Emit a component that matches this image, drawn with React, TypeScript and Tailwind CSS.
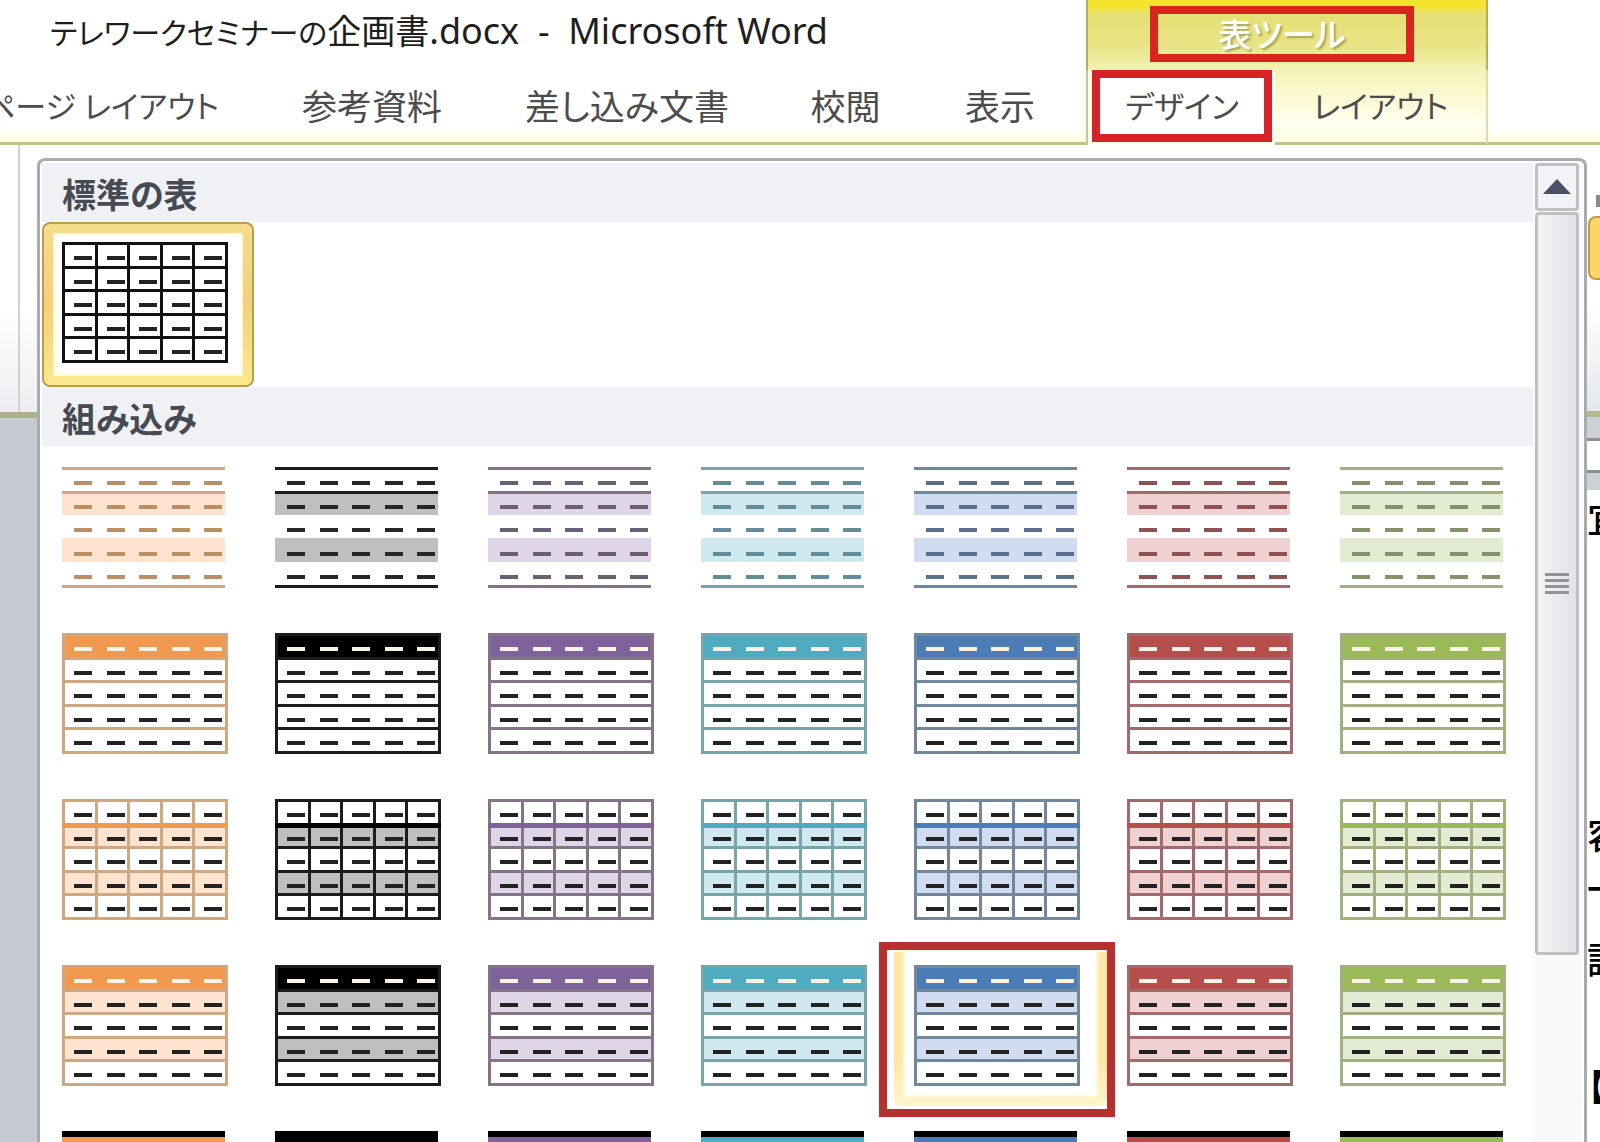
import clsx from 'clsx';

type Theme = {
  name: string;
  head: string;
  line: string;
  band: string;
  dash: string;
};

type Variant = 'plain' | 'list' | 'grid' | 'banded' | 'dark' | 'basic';

const themes: Theme[] = [
  { name: 'オレンジ', head: '#f0994f', line: '#cfa882', band: '#fde3d0', dash: '#b98f63' },
  { name: '黒', head: '#000000', line: '#1c1c1c', band: '#bfbfbf', dash: '#262626' },
  { name: '紫', head: '#7f6299', line: '#857488', band: '#ded6e8', dash: '#6c5f74' },
  { name: '水色', head: '#4fabbf', line: '#78a5ac', band: '#d0e9f0', dash: '#628d98' },
  { name: '青', head: '#4c7cb6', line: '#71879c', band: '#d1dcf0', dash: '#5b6f8a' },
  { name: '赤', head: '#b84d4d', line: '#a26a6a', band: '#f0d1d1', dash: '#8f5252' },
  { name: '緑', head: '#9aba59', line: '#a1b07c', band: '#e3ecd3', dash: '#82926a' },
];

const variants: Variant[] = ['plain', 'list', 'grid', 'banded', 'dark'];

const variantNames: Record<Variant, string> = {
  basic: '表 (格子)',
  plain: '表 (網かけ)',
  list: '表 (リスト)',
  grid: '表 (グリッド)',
  banded: '表 (縞模様)',
  dark: '表 (濃色)',
};

const font = "font-['Noto_Sans','Noto_Sans_CJK_JP',sans-serif]";
const steps = [0, 1, 2, 3, 4];
const rowY = (i: number) => Math.round(i * 23.6);
const colX = (i: number) => Math.round(i * 32.5);

function TableThumb({ variant, theme }: { variant: Variant; theme: Theme }) {
  const { head, line, band, dash } = theme;
  const open = variant === 'plain' || variant === 'dark';
  const headed = variant === 'list' || variant === 'banded' || variant === 'dark';
  const striped = variant === 'plain' || variant === 'grid' || variant === 'banded';
  const width = open ? 163 : 166;
  const lines = variant === 'plain' ? [0, 1, 5] : variant === 'dark' ? [] : [0, 1, 2, 3, 4, 5];

  return (
    <svg width="166" height="122" viewBox="0 0 166 122" aria-hidden="true">
      {striped && <rect x="0" y={rowY(1)} width={width} height="24" fill={band} />}
      {striped && <rect x="0" y={rowY(3)} width={width} height="24" fill={band} />}
      {headed && <rect x="0" y="0" width={width} height="26" fill={head} />}
      {lines.map((i) => (
        <rect key={i} x="0" y={rowY(i)} width={width} height="3" fill={line} />
      ))}
      {!open && <rect x="0" y="0" width="3" height="121" fill={line} />}
      {!open && <rect x="163" y="0" width="3" height="121" fill={line} />}
      {(variant === 'grid' || variant === 'basic') &&
        [1, 2, 3, 4].map((i) => (
          <rect key={i} x={colX(i)} y="0" width="3" height="121" fill={line} />
        ))}
      {variant === 'grid' && <rect x="0" y="24" width="166" height="5" fill={head} />}
      {variant === 'dark' && <rect x="0" y="0" width="163" height="6" fill="#000" />}
      {steps.map((r) =>
        steps.map((c) => (
          <rect
            key={`${r}-${c}`}
            x={12 + colX(c)}
            y={14 + rowY(r)}
            width="18"
            height="4"
            fill={headed && r === 0 ? '#fbf3e6' : variant === 'plain' ? dash : '#222'}
          />
        ))
      )}
    </svg>
  );
}

function SectionTitle({ children }: { children: string }) {
  return (
    <h2 className="flex h-[59px] items-center bg-[#f0f1f5] pt-1 pl-5 text-[34px] leading-none font-bold text-[#464a52]">
      {children}
    </h2>
  );
}

function Tab({ label, className }: { label: string; className?: string }) {
  return (
    <button
      type="button"
      role="tab"
      className={clsx('flex shrink-0 items-center justify-center leading-none whitespace-nowrap text-[#4c4c4c]', className)}
    >
      {label}
    </button>
  );
}

function RibbonHeader() {
  return (
    <header className="flex h-[145px] shrink-0">
      <div className="flex w-[1086px] shrink-0 flex-col border-b-3 border-[#c3c08c] bg-linear-to-t from-[#fdfdd9] to-white to-10%">
        <h1 className="h-[70px] pt-[13px] pl-[50px] text-[36px] leading-9 whitespace-pre text-[#1e1e1e]">
          <span className="text-[30px]">テレワークセミナーの</span>
          <span className="text-[34px]">企画書</span>.docx{'  -  '}Microsoft Word
        </h1>
        <div role="tablist" aria-label="リボン" className="flex flex-1">
          <Tab label="ページ レイアウト" className="w-[260px] justify-end pr-[41px] text-[31px]" />
          <Tab label="参考資料" className="w-[224px] text-[35px]" />
          <Tab label="差し込み文書" className="w-[286px] text-[35px]" />
          <Tab label="校閲" className="w-[151px] text-[35px]" />
          <Tab label="表示" className="w-[158px] text-[35px]" />
        </div>
      </div>
      <div className="flex w-[402px] shrink-0 flex-col bg-[linear-gradient(#f4e52c_0px,#f4e52c_6px,#e4e073_14px,#e8e486_45px,#f6f5bd_75px,#fffff0_125px,#fffee0_145px)]">
        <div className="flex h-[70px] justify-center border-x-2 border-[#b4ae5c] pt-[6px] pr-[10px]">
          <div className="flex h-[56px] w-[264px] items-center justify-center border-8 border-[#d8261c] text-[33px] leading-none font-medium text-white [text-shadow:2px_2px_2px_#a8a45c]">
            表ツール
          </div>
        </div>
        <div role="tablist" aria-label="表ツール" className="flex flex-1 border-l-2 border-[#c9c58a]">
          <div className="flex w-[187px] bg-[#fffef0] pl-1">
            <Tab label="デザイン" className="mb-[3px] w-[180px] border-8 border-[#d8222a] bg-white text-[31px]" />
          </div>
          <div className="flex flex-1 border-r-2 border-b-3 border-r-[#dedcae] border-b-[#c3c08c]">
            <Tab label="レイアウト" className="w-full text-[31px]" />
          </div>
        </div>
      </div>
      <div className="flex-1 border-b-3 border-[#c3c08c] bg-linear-to-t from-[#fdfdd9] to-white to-10%" />
    </header>
  );
}

function Gallery() {
  return (
    <section aria-label="表のスタイル" className="mt-[13px] flex min-w-0 flex-1 overflow-hidden rounded-t-lg border-3 border-b-0 border-[#a9abad] bg-white pt-[2px] pr-[2px] pl-[2px]">
      <div className="min-w-0 flex-1">
        <SectionTitle>標準の表</SectionTitle>
        <button
          type="button"
          aria-label={variantNames.basic}
          className="flex h-[165px] w-[212px] rounded-lg border-2 border-[#bb9d50] bg-linear-to-b from-[#f6dc8d] via-[#f4cf7c] to-[#fbe98e] p-[9px]"
        >
          <span className="flex h-full w-full items-start bg-white pt-[9px] pl-[9px] shadow-[inset_0_0_3px_2px_#fff9cf]">
            <TableThumb variant="basic" theme={{ ...themes[1], line: '#111' }} />
          </span>
        </button>
        <SectionTitle>組み込み</SectionTitle>
        <div className="grid auto-rows-[166px] grid-cols-7">
          {variants.map((variant) =>
            themes.map((theme, col) => {
              const hovered = variant === 'banded' && col === 4;
              return (
                <button
                  key={`${variant}-${theme.name}`}
                  type="button"
                  aria-label={`${variantNames[variant]} ${theme.name}`}
                  className={clsx('relative flex items-start pt-[21px] pl-5', hovered && 'z-10')}
                >
                  {hovered && (
                    <>
                      <span className="absolute inset-x-0 top-2 bottom-1 rounded-b-lg bg-linear-to-b from-[#fde7a2] from-70% to-[#fff5cc]" />
                      <span className="absolute inset-x-[11px] top-2 bottom-[15px] bg-white shadow-[0_0_3px_2px_#fffbe6]" />
                      <span className="absolute -top-[2px] -right-2 -bottom-[7px] -left-[15px] border-8 border-[#b5302f]" />
                    </>
                  )}
                  <span className="relative">
                    <TableThumb variant={variant} theme={theme} />
                  </span>
                </button>
              );
            })
          )}
        </div>
      </div>
      <div className="flex w-[49px] flex-col bg-[#f9f9fa] px-[2px]">
        <button
          type="button"
          aria-label="上へスクロール"
          className="flex h-[48px] w-[44px] items-center justify-center rounded-sm border-3 border-[#bfc0c2] bg-[#f2f3f7]"
        >
          <svg width="28" height="16" viewBox="0 0 28 16" aria-hidden="true">
            <path d="M14 0 28 15H0Z" fill="#4a5168" />
          </svg>
        </button>
        <div className="mt-[1px] flex h-[743px] w-[44px] items-center justify-center rounded-sm border-3 border-[#bfc0c2] bg-linear-to-r from-[#f3f3f4] to-[#e2e3e7]">
          <div className="flex h-[22px] w-6 flex-col justify-between">
            {[0, 1, 2, 3].map((i) => (
              <span key={i} className="h-[3px] bg-[#929396]" />
            ))}
          </div>
        </div>
      </div>
    </section>
  );
}

function DocumentEdge() {
  return (
    <div className="flex w-[13px] shrink-0 flex-col overflow-hidden bg-white text-[36px] leading-9 font-medium text-black">
      <div className="flex h-[266px] shrink-0 flex-col items-end bg-linear-to-b from-white from-60% to-[#e4e7eb]">
        <span className="mt-[50px] h-3 w-1 bg-[#8a8c90]" />
        <span className="mt-[9px] h-[64px] w-3 rounded-l-lg border-2 border-r-0 border-[#c39a3e] bg-[#fbd568]" />
      </div>
      <div className="h-[27px] shrink-0 border-t-6 border-[#b4b78c] bg-[#cdd1d6]" />
      <div className="h-[35px] shrink-0 border-y-3 border-[#8c8f93] bg-white" />
      <div className="h-[17px] shrink-0 bg-[#cdd1d6]" />
      <p className="mt-[12px]">宜</p>
      <p className="mt-[280px]">容</p>
      <p className="mt-[18px]">一</p>
      <p className="mt-[35px]">課</p>
      <p className="mt-[91px] font-bold">【</p>
    </div>
  );
}

export default function App() {
  return (
    <div className={clsx('flex h-screen flex-col overflow-hidden bg-white [font-feature-settings:"palt"]', font)}>
      <RibbonHeader />
      <main className="flex min-h-0 flex-1">
        <div className="flex w-[37px] shrink-0 flex-col bg-[#c6cad1]">
          <div className="flex h-[273px] border-b-6 border-[#adb08a] bg-linear-to-b from-white from-60% to-[#eceef1]">
            <div className="w-5 border-r-2 border-[#d2d3c4]" />
          </div>
        </div>
        <Gallery />
        <DocumentEdge />
      </main>
    </div>
  );
}
